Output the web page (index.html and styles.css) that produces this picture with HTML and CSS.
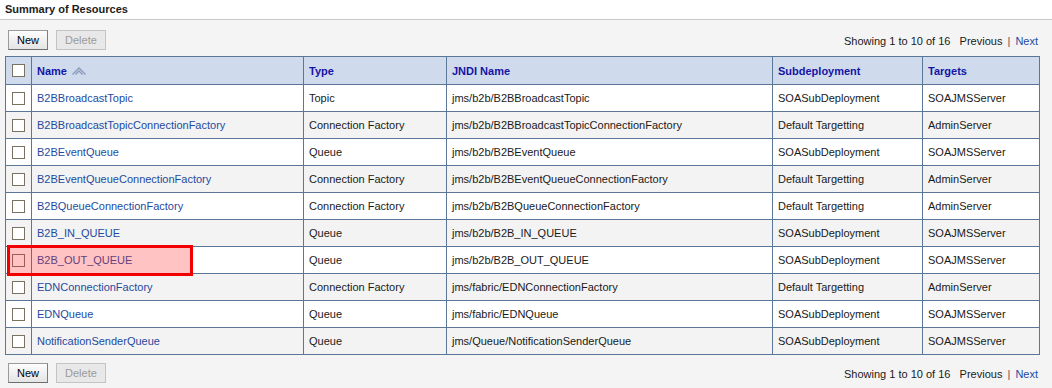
FILE: index.html
```html
<!DOCTYPE html>
<html>
<head>
<meta charset="utf-8">
<link rel="stylesheet" href="styles.css">
</head>
<body>
<div class="page">
  <div class="title">Summary of Resources</div>
  <div class="content">
    <div class="bar">
      <div class="btns"><button class="btn">New</button><button class="btn dis">Delete</button></div>
      <div class="pager">Showing 1 to 10 of 16&nbsp;&nbsp; Previous <span class="sep">|</span> <a class="lnk">Next</a></div>
    </div>
    <div class="tblwrap">
    <table class="tbl">
      <colgroup><col class="c0"><col class="c1"><col class="c2"><col class="c3"><col class="c4"><col class="c5"></colgroup>
      <thead>
        <tr><th class="chk"><span class="cb"></span></th><th>Name <svg class="sort" width="16" height="10" viewBox="0 0 16 10"><path d="M1.5 8.5 L8 2 L14.5 8.5" fill="none" stroke="#8a9ab8" stroke-width="1.4"/><path d="M4.5 8.5 L8 5 L11.5 8.5" fill="none" stroke="#8a9ab8" stroke-width="1.4"/></svg></th><th>Type</th><th>JNDI Name</th><th>Subdeployment</th><th>Targets</th></tr>
      </thead>
      <tbody>
        <tr><td class="chk"><span class="cb"></span></td><td><a class="lnk">B2BBroadcastTopic</a></td><td>Topic</td><td>jms/b2b/B2BBroadcastTopic</td><td>SOASubDeployment</td><td>SOAJMSServer</td></tr>
        <tr><td class="chk"><span class="cb"></span></td><td><a class="lnk">B2BBroadcastTopicConnectionFactory</a></td><td>Connection Factory</td><td>jms/b2b/B2BBroadcastTopicConnectionFactory</td><td>Default Targetting</td><td>AdminServer</td></tr>
        <tr><td class="chk"><span class="cb"></span></td><td><a class="lnk">B2BEventQueue</a></td><td>Queue</td><td>jms/b2b/B2BEventQueue</td><td>SOASubDeployment</td><td>SOAJMSServer</td></tr>
        <tr><td class="chk"><span class="cb"></span></td><td><a class="lnk">B2BEventQueueConnectionFactory</a></td><td>Connection Factory</td><td>jms/b2b/B2BEventQueueConnectionFactory</td><td>Default Targetting</td><td>AdminServer</td></tr>
        <tr><td class="chk"><span class="cb"></span></td><td><a class="lnk">B2BQueueConnectionFactory</a></td><td>Connection Factory</td><td>jms/b2b/B2BQueueConnectionFactory</td><td>Default Targetting</td><td>AdminServer</td></tr>
        <tr><td class="chk"><span class="cb"></span></td><td><a class="lnk">B2B_IN_QUEUE</a></td><td>Queue</td><td>jms/b2b/B2B_IN_QUEUE</td><td>SOASubDeployment</td><td>SOAJMSServer</td></tr>
        <tr><td class="chk"><span class="cb"></span></td><td><a class="lnk">B2B_OUT_QUEUE</a></td><td>Queue</td><td>jms/b2b/B2B_OUT_QUEUE</td><td>SOASubDeployment</td><td>SOAJMSServer</td></tr>
        <tr><td class="chk"><span class="cb"></span></td><td><a class="lnk">EDNConnectionFactory</a></td><td>Connection Factory</td><td>jms/fabric/EDNConnectionFactory</td><td>Default Targetting</td><td>AdminServer</td></tr>
        <tr><td class="chk"><span class="cb"></span></td><td><a class="lnk">EDNQueue</a></td><td>Queue</td><td>jms/fabric/EDNQueue</td><td>SOASubDeployment</td><td>SOAJMSServer</td></tr>
        <tr><td class="chk"><span class="cb"></span></td><td><a class="lnk">NotificationSenderQueue</a></td><td>Queue</td><td>jms/Queue/NotificationSenderQueue</td><td>SOASubDeployment</td><td>SOAJMSServer</td></tr>
      </tbody>
    </table>
    <div class="mark"></div>
    </div>
    <div class="bar bottom">
      <div class="btns"><button class="btn">New</button><button class="btn dis">Delete</button></div>
      <div class="pager">Showing 1 to 10 of 16&nbsp;&nbsp; Previous <span class="sep">|</span> <a class="lnk">Next</a></div>
    </div>
  </div>
</div>
</body>
</html>
```

FILE: styles.css
```css
html, body {
  margin: 0;
  padding: 0;
  background: #f4f4f4;
  font-family: "Liberation Sans", Arial, sans-serif;
  font-size: 11px;
  color: #000;
}
.page {
  width: 1052px;
  height: 388px;
  overflow: hidden;
}
.title {
  background: #ffffff;
  height: 19px;
  line-height: 18px;
  padding-left: 5px;
  font-weight: bold;
  font-size: 11px;
  color: #1c1c1c;
  border-bottom: 1px solid #c8c8c8;
}
.content {
  padding: 0 13px 0 5px;
}
.bar {
  display: flex;
  justify-content: space-between;
  align-items: center;
  box-sizing: border-box;
  height: 36px;
  padding: 10px 0 6px;
}
.bar.bottom {
  height: 34px;
  padding: 7px 0 6px;
}
.btns {
  display: flex;
  gap: 8px;
  padding-left: 3px;
}
.btn {
  font-family: "Liberation Sans", Arial, sans-serif;
  font-size: 11px;
  height: 20px;
  padding: 0 8px;
  margin: 0;
  background: linear-gradient(#fdfdfd, #e4e4e4);
  border: 1px solid #9a9a9a;
  border-right-color: #7d7d7d;
  border-bottom-color: #6f6f6f;
  color: #000;
  border-radius: 0;
}
.btn.dis {
  background: #e8e8e8;
  border: 1px solid #c4c4c4;
  color: #9a9a9a;
}
.pager {
  color: #1a1a1a;
  padding-right: 1px;
  padding-top: 2px;
}
.pager .sep {
  color: #555;
  padding: 0 2px;
}
.lnk {
  color: #1f4a9f;
  text-decoration: none;
}
.tblwrap {
  position: relative;
}
.tbl {
  border-collapse: collapse;
  table-layout: fixed;
  width: 1035px;
  border: 1px solid #5b7797;
}
.c0 { width: 26px; }
.c1 { width: 272px; }
.c2 { width: 143px; }
.c3 { width: 326px; }
.c4 { width: 150px; }
.c5 { width: 117px; }
.tbl th, .tbl td {
  border: 1px solid #5b7797;
  height: 26px;
  padding: 0 5px;
  text-align: left;
  white-space: nowrap;
  overflow: hidden;
  color: #1a1a1a;
}
.tbl th {
  background: #cfdbed;
  color: #1414a6;
  font-weight: bold;
  height: 27px;
}
.tbl tbody tr:nth-child(odd) td { background: #ffffff; }
.tbl tbody tr:nth-child(even) td { background: #f3f3f3; }
.tbl .chk {
  padding: 0;
  text-align: center;
}
.cb {
  display: inline-block;
  width: 11px;
  height: 11px;
  border: 1px solid #7b7163;
  background: #fff;
  vertical-align: middle;
}
.sort {
  vertical-align: -1px;
  margin-left: 1px;
}
.mark {
  position: absolute;
  left: 2px;
  top: 189px;
  width: 180px;
  height: 25px;
  border: 3px solid #f20000;
  background: rgba(255, 40, 40, 0.28);
}
```
